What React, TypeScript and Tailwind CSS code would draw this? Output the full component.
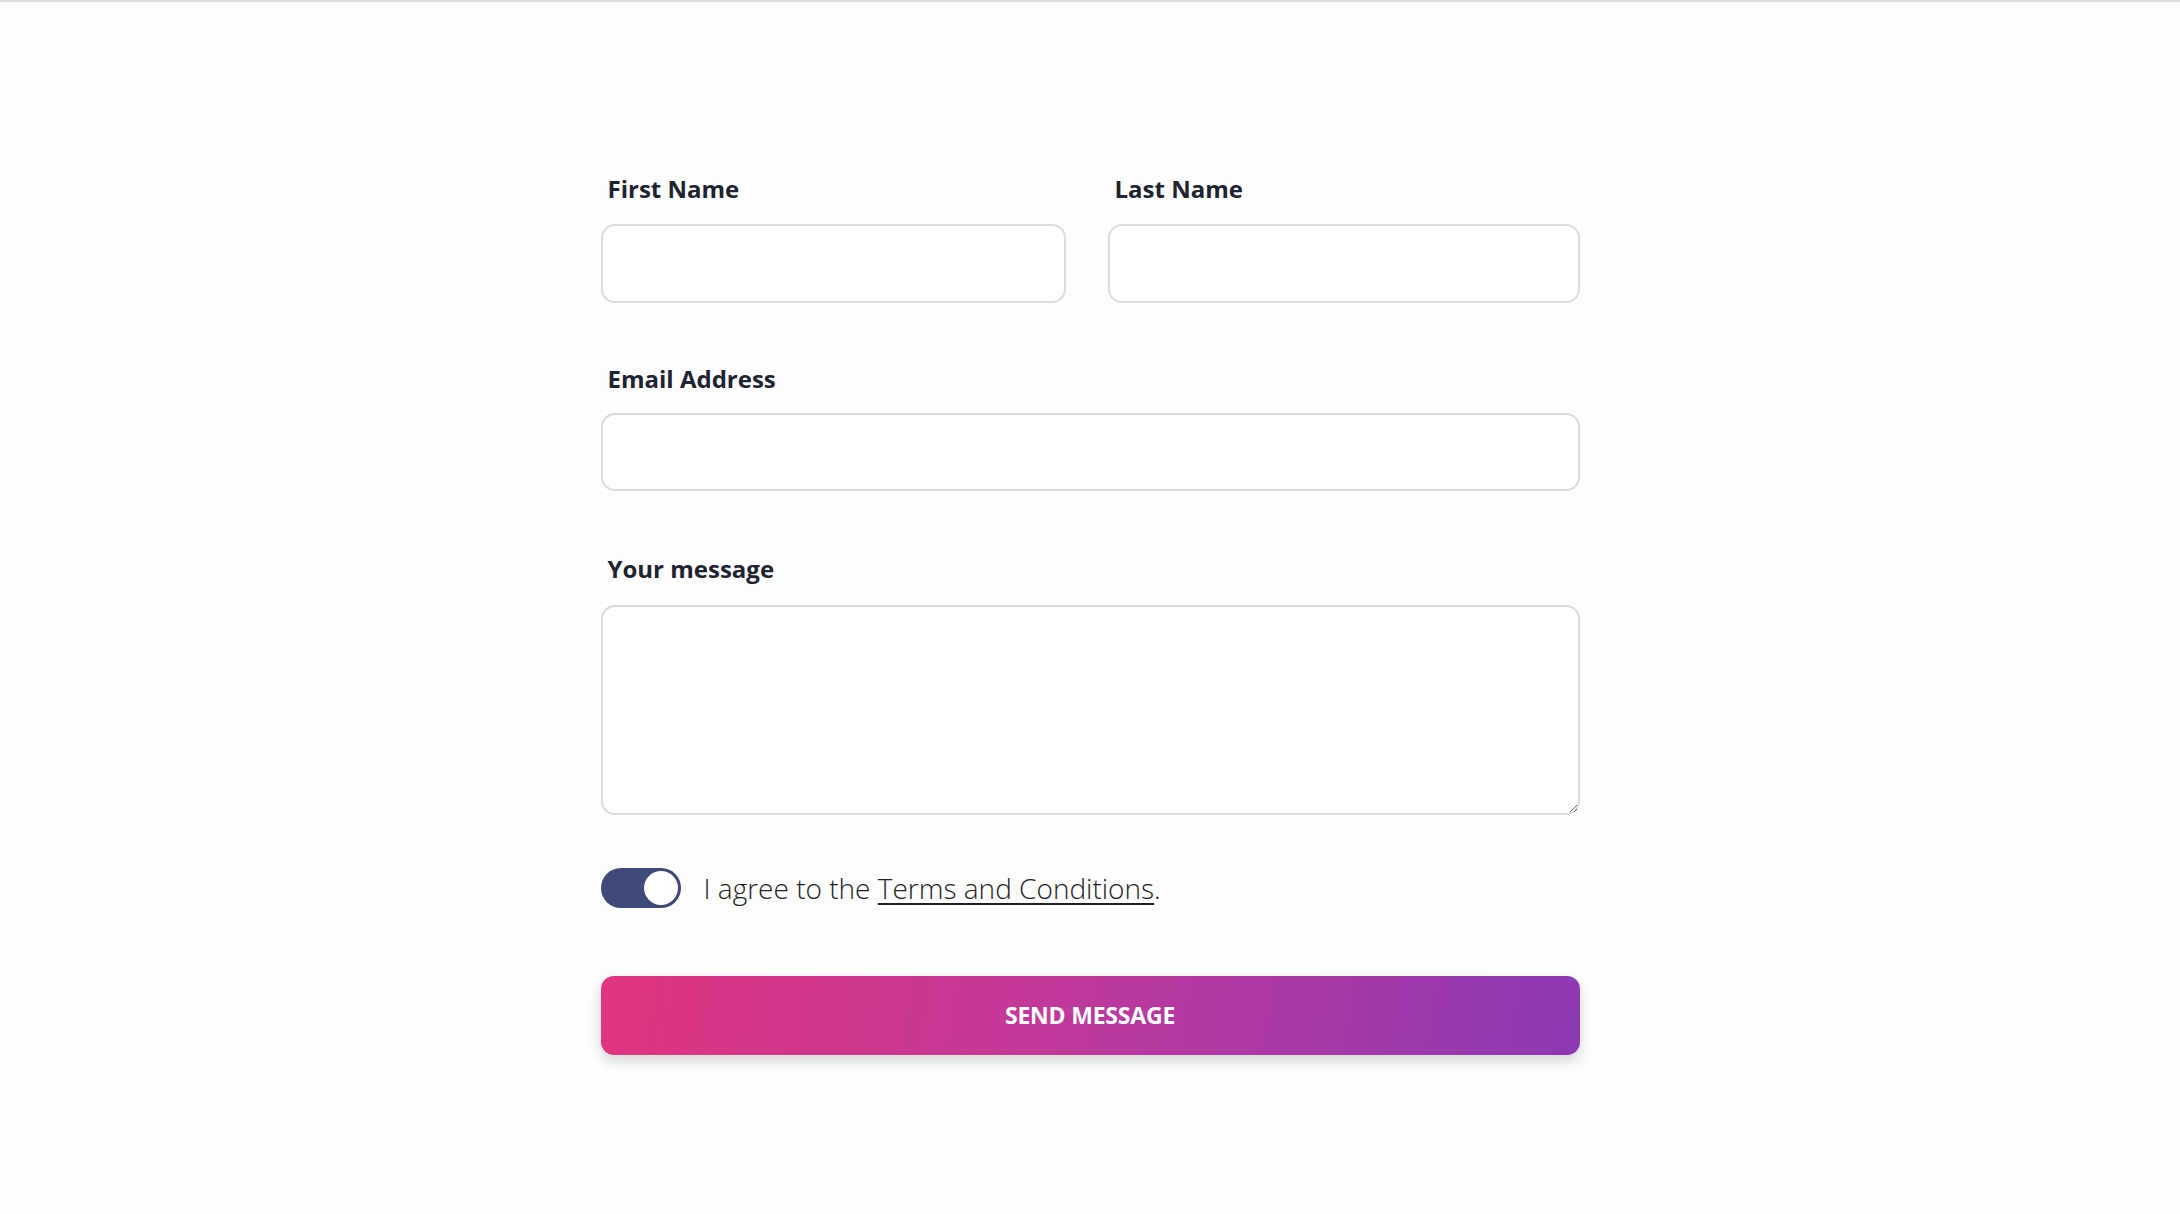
import { useState } from "react";

const label = "block pl-[7px] text-[24px] leading-[32px] font-bold text-[#1e2330]";
const field =
  "block w-full rounded-[14px] border-2 border-[#dcdcdc] bg-white px-4 text-[20px] outline-none focus:border-[#b9b9c9]";

export default function App() {
  const [agree, setAgree] = useState(true);

  return (
    <div
      className="min-h-screen border-t-2 border-[#dedede] bg-[#fdfdfd] pt-[171px]"
      style={{ fontFamily: '"Open Sans", "Noto Sans", sans-serif' }}
    >
      <form className="mx-auto w-[979px]" onSubmit={(e) => e.preventDefault()}>
        <div className="grid grid-cols-[465px_472px] gap-x-[42px]">
          <div>
            <label className={label}>First Name</label>
            <input className={`${field} mt-[19px] h-[79px]`} />
          </div>
          <div>
            <label className={label}>Last Name</label>
            <input className={`${field} mt-[19px] h-[79px]`} />
          </div>
        </div>

        <div className="mt-[60px]">
          <label className={label}>Email Address</label>
          <input type="email" className={`${field} mt-[18px] h-[78px]`} />
        </div>

        <div className="mt-[62px]">
          <label className={label}>Your message</label>
          <textarea className={`${field} mt-[20px] h-[210px] py-3`} />
        </div>

        <div className="mt-[53px] flex items-center gap-[23px]">
          <button
            type="button"
            onClick={() => setAgree(!agree)}
            className={`flex h-[40px] w-[80px] items-center rounded-full p-[3px] ${
              agree ? "justify-end bg-[#3f4a78]" : "justify-start bg-[#c9c9d3]"
            }`}
          >
            <span className="h-[34px] w-[34px] rounded-full bg-white" />
          </button>
          <p className="text-[28px] leading-[40px] font-light text-[#1f1f26]">
            I agree to the{" "}
            <a href="#" className="underline decoration-[1.5px] underline-offset-[4px]">
              Terms and Conditions
            </a>
            .
          </p>
        </div>

        <button
          type="submit"
          className="mt-[68px] flex h-[79px] w-full items-center justify-center rounded-[13px] bg-[linear-gradient(100deg,#e0357f_0%,#c2399a_45%,#8c39b3_100%)] text-[23px] font-bold tracking-[-0.2px] text-white shadow-[0_6px_14px_rgba(0,0,0,0.16)]"
        >
          SEND MESSAGE
        </button>
      </form>
    </div>
  );
}
